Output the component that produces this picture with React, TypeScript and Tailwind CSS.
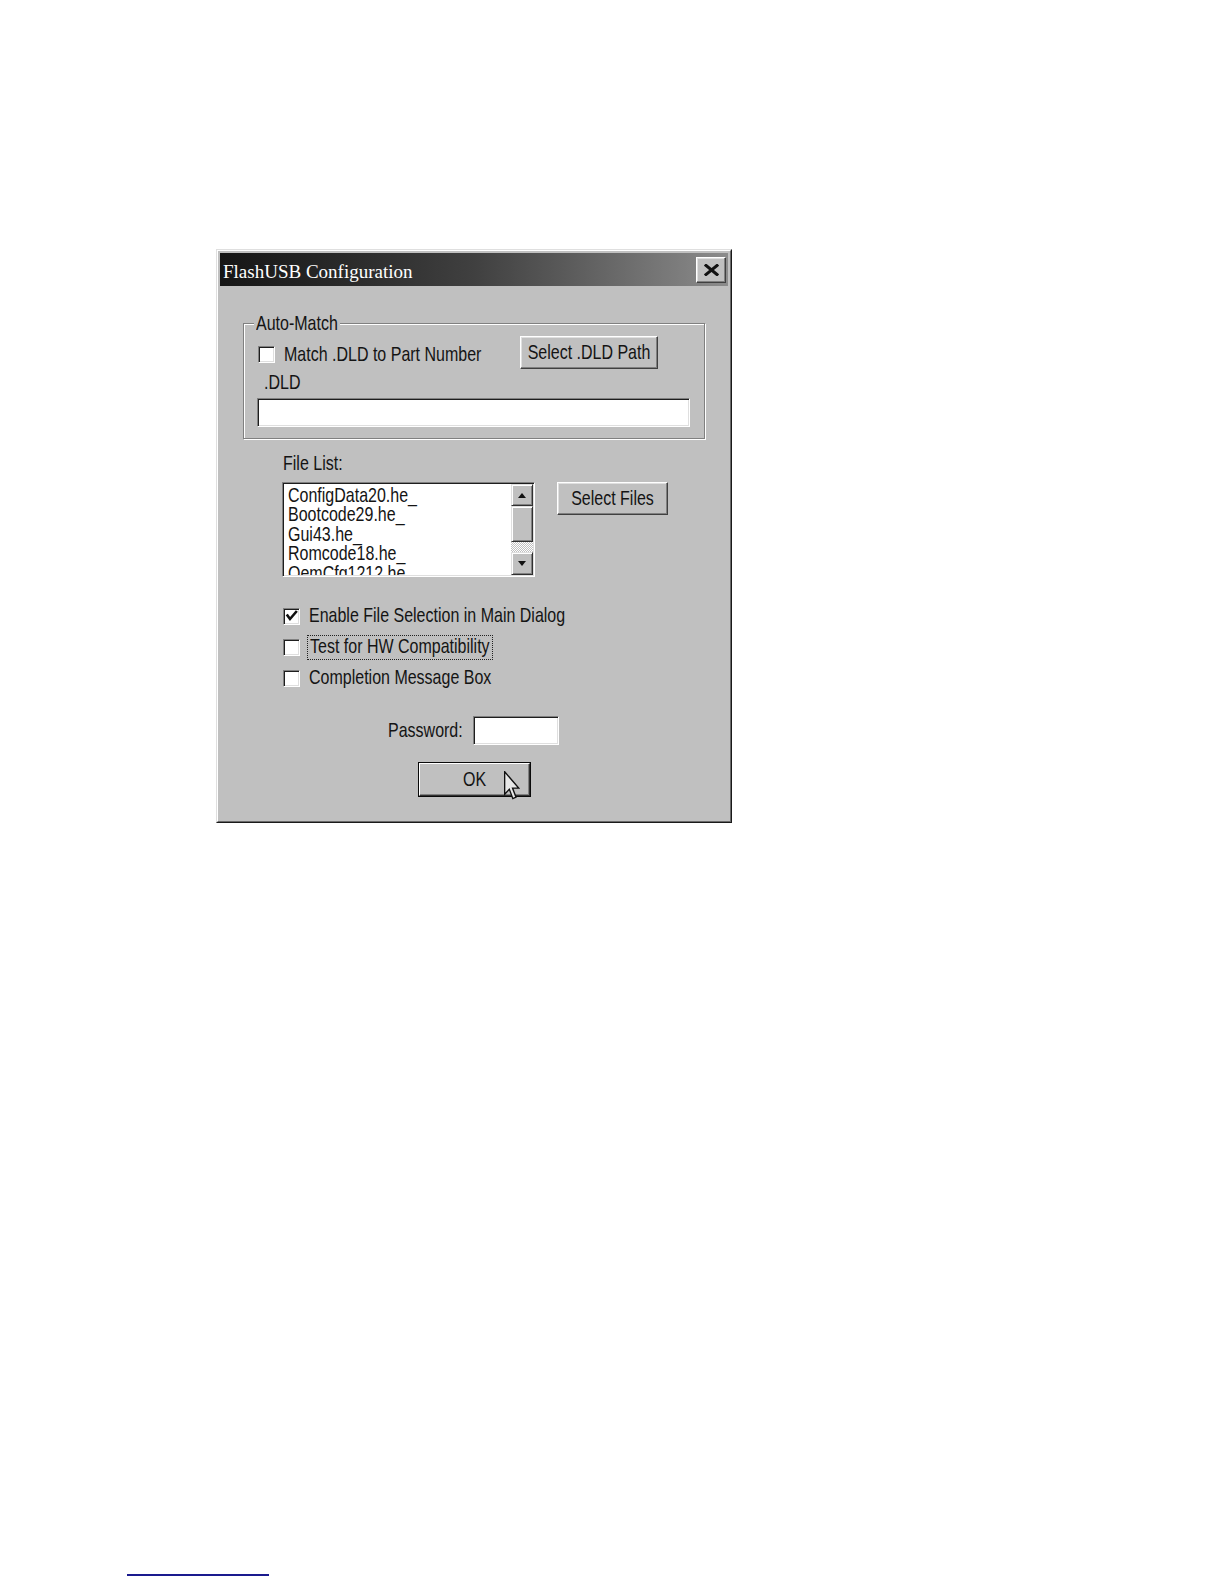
import React from "react";

const TXT =
  "inline-block whitespace-nowrap scale-y-[1.22] font-['Liberation_Sans',Arial,sans-serif] text-[16px] leading-[20px] text-[#141414]";

const RAISED =
  "border border-t-white border-l-white border-r-[#404040] border-b-[#404040] shadow-[inset_-1px_-1px_0_#808080,inset_1px_1px_0_#dfdfdf] bg-[#c0c0c0]";

const SUNKEN =
  "border border-t-[#808080] border-l-[#808080] border-r-white border-b-white shadow-[inset_1px_1px_0_#1e1e1e,inset_-1px_-1px_0_#dfdfdf] bg-white";

const SCROLLBTN =
  "border border-t-[#dfdfdf] border-l-[#dfdfdf] border-r-[#303030] border-b-[#303030] shadow-[inset_1px_1px_0_#fff,inset_-1px_-1px_0_#808080] bg-[#c0c0c0]";

function T({
  children,
  className = "",
}: {
  children: React.ReactNode;
  className?: string;
}) {
  return <span className={`${TXT} ${className}`}>{children}</span>;
}

function CheckBox({ checked = false }: { checked?: boolean }) {
  return (
    <div className={`relative h-[17px] w-[17px] shrink-0 ${SUNKEN}`}>
      {checked && (
        <svg
          className="absolute left-0 top-0"
          width="15"
          height="15"
          viewBox="0 0 15 15"
        >
          <polyline
            points="3.5,6.5 6,10 12,3"
            fill="none"
            stroke="#111"
            strokeWidth="2.6"
            strokeLinecap="square"
          />
        </svg>
      )}
    </div>
  );
}

function TitleBar() {
  return (
    <div className="flex h-[33px] shrink-0 items-center bg-linear-to-r from-[#161616] via-[#404040] to-[#8c8c8c] pl-[3px] pr-[2px]">
      <span className="mt-[4px] font-['Liberation_Serif',serif] text-[19px] leading-[22px] text-white">
        FlashUSB Configuration
      </span>
      <div
        className={`ml-auto flex h-[26px] w-[30px] items-center justify-center ${RAISED}`}
      >
        <svg width="15" height="12" viewBox="0 0 15 12">
          <path
            d="M2 1.5 L13 10.5 M13 1.5 L2 10.5"
            stroke="#111"
            strokeWidth="3"
            strokeLinecap="square"
          />
        </svg>
      </div>
    </div>
  );
}

function AutoMatchGroup() {
  return (
    <div className="relative ml-[23px] mt-[37px] h-[116px] w-[462px] border border-[#808080] shadow-[inset_1px_1px_0_#fff,1px_1px_0_#fff]">
      <div className="absolute -top-[10px] left-[10px] flex h-[20px] items-center bg-[#c0c0c0] px-[2px]">
        <T>Auto-Match</T>
      </div>
      <div className="mt-[12px] flex h-[33px] items-center">
        <div className="ml-[14px] mt-[4px] flex w-[262px] items-center">
          <CheckBox />
          <T className="ml-[9px]">Match .DLD to Part Number</T>
        </div>
        <div
          className={`flex h-[33px] w-[138px] items-center justify-center ${RAISED}`}
        >
          <T>Select .DLD Path</T>
        </div>
      </div>
      <div className="ml-[20px] mt-[4px] flex h-[20px] items-center">
        <T>.DLD</T>
      </div>
      <div className={`ml-[13px] mt-[5px] h-[29px] w-[433px] ${SUNKEN}`} />
    </div>
  );
}

function Triangle({ up }: { up: boolean }) {
  return (
    <svg width="8" height="5" viewBox="0 0 8 5">
      <polygon points={up ? "4,0 8,5 0,5" : "0,0 8,0 4,5"} fill="#111" />
    </svg>
  );
}

function FileList() {
  const items = [
    "ConfigData20.he_",
    "Bootcode29.he_",
    "Gui43.he_",
    "Romcode18.he_",
    "OemCfg1212.he_",
  ];
  return (
    <div
      className={`flex h-[95px] w-[253px] overflow-hidden p-[1px] ${SUNKEN}`}
    >
      <div className="flex flex-1 flex-col overflow-hidden pl-[4px] pt-[2px]">
        {items.map((it) => (
          <div key={it} className="flex h-[19.5px] shrink-0 items-center">
            <span className={`${TXT} leading-[19.5px]`}>{it}</span>
          </div>
        ))}
      </div>
      <div className="flex w-[22px] shrink-0 flex-col">
        <div
          className={`flex h-[22px] shrink-0 items-center justify-center ${SCROLLBTN}`}
        >
          <Triangle up />
        </div>
        <div className={`h-[36px] shrink-0 ${SCROLLBTN}`} />
        <div className="h-[10px] shrink-0 bg-[repeating-conic-gradient(#ffffff_0_25%,#c0c0c0_0_50%)] bg-[length:2px_2px]" />
        <div
          className={`flex flex-1 items-center justify-center ${SCROLLBTN}`}
        >
          <Triangle up={false} />
        </div>
      </div>
    </div>
  );
}

function Cursor() {
  return (
    <svg
      className="absolute left-[84px] top-[7px]"
      width="16"
      height="29"
      viewBox="0 0 12 20"
      preserveAspectRatio="none"
    >
      <path
        d="M0.5 0.5 L0.5 16 L4 12.6 L6.6 19 L9 18 L6.4 11.8 L11 11.8 Z"
        fill="#e8e8e8"
        stroke="#111"
        strokeWidth="1"
        strokeLinejoin="miter"
      />
    </svg>
  );
}

function Content() {
  return (
    <div className="flex flex-1 flex-col">
      <AutoMatchGroup />

      <div className="ml-[63px] mt-[15px] flex h-[20px] items-center">
        <T>File List:</T>
      </div>

      <div className="ml-[62px] mt-[8px] flex items-start">
        <FileList />
        <div
          className={`ml-[22px] flex h-[33px] w-[111px] items-center justify-center ${RAISED}`}
        >
          <T>Select Files</T>
        </div>
      </div>

      <div className="ml-[63px] mt-[29px] flex flex-col gap-[11px]">
        <div className="flex h-[20px] items-center">
          <CheckBox checked />
          <T className="ml-[9px]">Enable File Selection in Main Dialog</T>
        </div>
        <div className="flex h-[20px] items-center">
          <CheckBox />
          <span className="ml-[7px] flex h-[25px] shrink-0 items-center border border-dotted border-[#222] px-[2px]">
            <T>Test for HW Compatibility</T>
          </span>
        </div>
        <div className="flex h-[20px] items-center">
          <CheckBox />
          <T className="ml-[9px]">Completion Message Box</T>
        </div>
      </div>

      <div className="ml-[168px] mt-[28px] flex h-[29px] items-center">
        <div className="flex w-[85px] items-center">
          <T>Password:</T>
        </div>
        <div className={`h-[29px] w-[86px] ${SUNKEN}`} />
      </div>

      <div className="ml-[198px] mt-[17px] h-[35px] w-[113px] border border-[#0a0a0a]">
        <div className="relative flex h-full w-full items-center justify-center border border-t-white border-l-white border-r-[#303030] border-b-[#303030] bg-[#c0c0c0] shadow-[inset_-1px_-1px_0_#808080]">
          <T>OK</T>
          <Cursor />
        </div>
      </div>
    </div>
  );
}

export default function App() {
  return (
    <div className="min-h-[1584px] w-full bg-white pt-[249px]">
      <div className="ml-[216px] h-[574px] w-[516px] border border-t-[#dfdfdf] border-l-[#dfdfdf] border-r-[#1a1a1a] border-b-[#1a1a1a]">
        <div className="flex h-full flex-col border border-t-white border-l-white border-r-[#6a6a6a] border-b-[#6a6a6a] bg-[#c0c0c0] p-[2px]">
          <TitleBar />
          <Content />
        </div>
      </div>
      <div className="ml-[127px] mt-[751px] h-[2px] w-[142px] bg-[#1a1a8e]" />
    </div>
  );
}
